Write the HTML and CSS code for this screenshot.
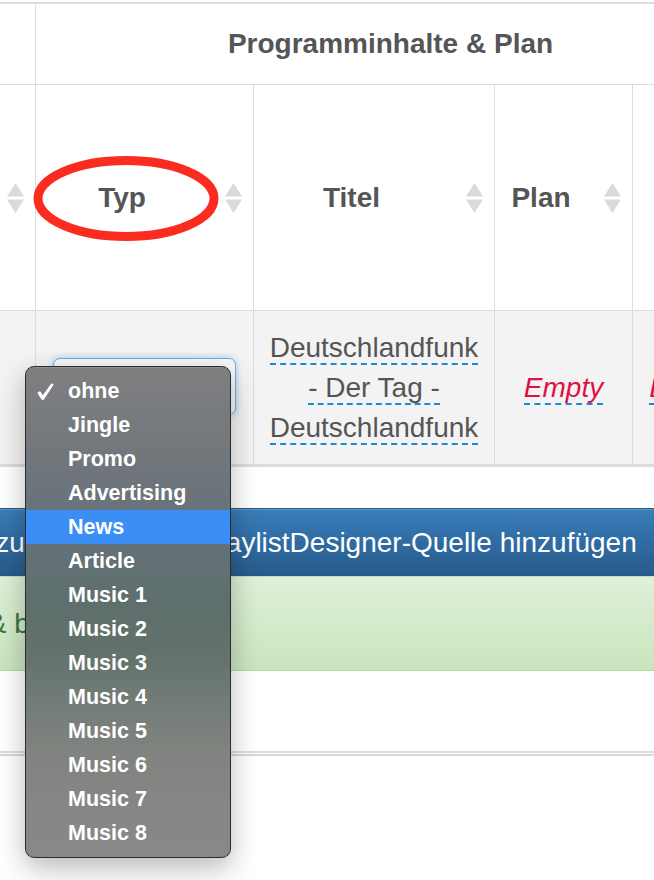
FILE: index.html
```html
<!DOCTYPE html>
<html lang="de">
<head>
<meta charset="utf-8">
<title>Programminhalte</title>
<link rel="stylesheet" href="styles.css">
</head>
<body>
<div class="page">
  <table class="grid">
    <colgroup><col class="c0"><col class="c1"><col class="c2"><col class="c3"><col class="c4"></colgroup>
    <thead>
      <tr class="r1">
        <th></th>
        <th colspan="4" class="group">Programminhalte &amp; Plan</th>
      </tr>
      <tr class="r2">
        <th class="sort"><svg class="sorter" viewBox="0 0 17 30"><path d="M8.5 0 L17 13.5 L0 13.5 Z M0 16.5 L17 16.5 L8.5 30 Z"/></svg></th>
        <th class="sort">Typ<svg class="sorter" viewBox="0 0 17 30"><path d="M8.5 0 L17 13.5 L0 13.5 Z M0 16.5 L17 16.5 L8.5 30 Z"/></svg></th>
        <th class="sort">Titel<svg class="sorter" viewBox="0 0 17 30"><path d="M8.5 0 L17 13.5 L0 13.5 Z M0 16.5 L17 16.5 L8.5 30 Z"/></svg></th>
        <th class="sort">Plan<svg class="sorter" viewBox="0 0 17 30"><path d="M8.5 0 L17 13.5 L0 13.5 Z M0 16.5 L17 16.5 L8.5 30 Z"/></svg></th>
        <th class="sort"></th>
      </tr>
    </thead>
    <tbody>
      <tr class="r3">
        <td></td>
        <td class="typ"><div class="select"></div></td>
        <td class="title"><span class="editable">Deutschlandfunk - Der Tag - Deutschlandfunk</span></td>
        <td><span class="editable empty">Empty</span></td>
        <td><span class="editable empty">Empty</span></td>
      </tr>
    </tbody>
  </table>

  <div class="btnbar">
    <span class="btn btn-a">Sendung hinzufügen</span>
    <span class="btn btn-b">PlaylistDesigner-Quelle hinzufügen</span>
  </div>
  <div class="alert"><span class="alert-text">Gespeichert &amp; bereit</span></div>
  <div class="sep"></div>
</div>

<svg class="annot" width="654" height="880" viewBox="0 0 654 880">
  <ellipse cx="126" cy="198.5" rx="88" ry="38" fill="none" stroke="#fa2b1f" stroke-width="9"/>
</svg>

<div class="menu">
  <svg class="check" viewBox="0 0 17 17"><path d="M0.3 9.9 L3.0 8.0 L5.8 12.2 L14.5 0.2 L16.7 1.4 L6.8 16.8 L4.7 16.8 Z"/></svg>
  <div class="item">ohne</div>
  <div class="item">Jingle</div>
  <div class="item">Promo</div>
  <div class="item">Advertising</div>
  <div class="item active">News</div>
  <div class="item">Article</div>
  <div class="item">Music 1</div>
  <div class="item">Music 2</div>
  <div class="item">Music 3</div>
  <div class="item">Music 4</div>
  <div class="item">Music 5</div>
  <div class="item">Music 6</div>
  <div class="item">Music 7</div>
  <div class="item">Music 8</div>
</div>
</body>
</html>
```

FILE: styles.css
```css
* { box-sizing: border-box; }
html, body { margin: 0; padding: 0; }
body {
  width: 654px;
  height: 880px;
  overflow: hidden;
  position: relative;
  background: #fff;
  font-family: "Liberation Sans", Arial, Helvetica, sans-serif;
  color: #555;
}
.page { padding-top: 2px; }

.grid {
  border-collapse: separate;
  border-spacing: 0;
  table-layout: fixed;
  width: 811px;
  margin-left: -65px;
}
.c0 { width: 101px; }
.c1 { width: 218px; }
.c2 { width: 241px; }
.c3 { width: 138px; }
.c4 { width: 113px; }

.grid th, .grid td {
  border-right: 1px solid #dcdcdc;
  border-bottom: 1px solid #dcdcdc;
  padding: 0;
  font-size: 28px;
  text-align: center;
  vertical-align: middle;
}
.grid th { font-weight: bold; color: #555; background: #fff; }
.r1 th { border-top: 2px solid #dcdcdc; height: 83px; }
.r2 th { height: 226px; }
.sort { position: relative; padding-right: 45px !important; }
.sorter {
  position: absolute;
  right: 11px;
  top: 50%;
  width: 17px;
  height: 30px;
  margin-top: -15px;
  fill: #dadada;
}
.r3 td { background: #f3f3f3; height: 156px; border-bottom-width: 3px; line-height: 40px; }
.r3 td.title { padding: 0 12px; }
.editable {
  border-bottom: 2px dashed #1a8ad2;
}
.empty { font-style: italic; color: #dd1144; }

.select {
  width: 183px;
  height: 57px;
  margin: 0 auto;
  border: 1px solid #66afe9;
  border-radius: 7px;
  background: #f7f7f7;
  box-shadow: 0 0 6px rgba(102, 175, 233, 0.6);
  position: relative;
  top: -1px;
}

.btnbar {
  margin-top: 41px;
  height: 68px;
  display: flex;
  align-items: center;
  background: linear-gradient(to bottom, #3a7db9 0%, #2f6ba3 50%, #285b88 100%);
  border-top: 1px solid #2a5a85;
  box-shadow: inset 0 1px 0 rgba(255, 255, 255, 0.18);
  color: #fff;
  font-size: 28px;
  white-space: nowrap;
}
.btn { flex-shrink: 0; }
.btn-a { margin-left: -162px; }
.btn-b { margin-left: 106px; }

.alert {
  height: 95px;
  display: flex;
  align-items: center;
  background: linear-gradient(to bottom, #dff0d8 0%, #c9e5bd 100%);
  border-top: 1px solid #c2e2b4;
  border-bottom: 1px solid #b2dba1;
  color: #3c763d;
  font-size: 28px;
  white-space: nowrap;
}
.alert-text { flex-shrink: 0; margin-left: -171px; }

.sep {
  margin-top: 80px;
  height: 5px;
  border-top: 2px solid #dedede;
  border-bottom: 2px solid #d8d8d8;
}

.annot {
  position: absolute;
  left: 0;
  top: 0;
  pointer-events: none;
}

.menu {
  position: absolute;
  left: 25px;
  top: 366px;
  width: 206px;
  height: 492px;
  padding: 7px 0;
  border: 1px solid #2c2c2c;
  border-radius: 9px;
  background: linear-gradient(to bottom,
    #7e7f81 0%,
    #72777b 18%,
    #65717a 34%,
    #5e6f6c 48%,
    #62716b 58%,
    #727c76 68%,
    #80837f 78%,
    #868686 90%,
    #888888 100%);
  box-shadow: 0 10px 28px rgba(0, 0, 0, 0.28), inset 0 1px 0 rgba(255,255,255,0.12);
  color: #fff;
  font-size: 21.5px;
  font-weight: bold;
}
.item {
  height: 34px;
  line-height: 34px;
  padding-left: 42px;
}
.item.active { background: #3a8ef5; }
.check {
  position: absolute;
  left: 11px;
  top: 16px;
  width: 17px;
  height: 17px;
  fill: #fff;
}
```
